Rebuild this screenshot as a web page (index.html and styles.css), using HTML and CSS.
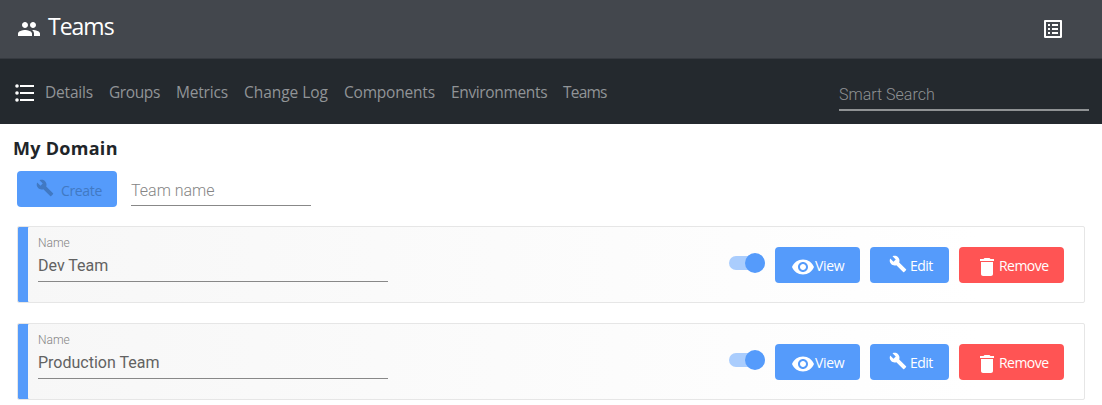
FILE: index.html
```html
<!DOCTYPE html>
<html lang="en">
<head>
<meta charset="utf-8">
<title>Teams</title>
<link rel="stylesheet" href="styles.css">
</head>
<body>
<svg class="sprite" aria-hidden="true">
  <symbol id="people" viewBox="0 0 24 24"><path d="M16 11c1.66 0 2.99-1.34 2.99-3S17.66 5 16 5c-1.66 0-3 1.34-3 3s1.34 3 3 3zm-8 0c1.66 0 2.99-1.34 2.99-3S9.66 5 8 5C6.34 5 5 6.34 5 8s1.34 3 3 3zm0 2c-2.33 0-7 1.17-7 3.5V19h14v-2.5c0-2.33-4.67-3.5-7-3.5zm8 0c-.29 0-.62.02-.97.05 1.16.84 1.97 1.97 1.97 3.45V19h6v-2.5c0-2.33-4.67-3.5-7-3.5z"/></symbol>
  <symbol id="list" viewBox="0 0 24 24"><path d="M4 10.2a1.8 1.8 0 1 0 0 3.6 1.8 1.8 0 0 0 0-3.6zm0-7a1.8 1.8 0 1 0 0 3.6 1.8 1.8 0 0 0 0-3.6zm0 14a1.8 1.8 0 1 0 0 3.6 1.8 1.8 0 0 0 0-3.600zM7 20h14v-2H7v2zm0-7h14v-2H7v2zm0-9v2h14V4H7z"/></symbol>
  <symbol id="list-alt" viewBox="0 0 24 24"><path d="M19 5v14H5V5h14m1.1-2H3.9c-.5 0-.9.4-.9.9v16.2c0 .4.4.9.9.9h16.2c.4 0 .9-.5.9-.9V3.9c0-.5-.5-.9-.9-.9zM11 7h6v2h-6V7zm0 4h6v2h-6v-2zm0 4h6v2h-6zM7 7h2v2H7zm0 4h2v2H7zm0 4h2v2H7z"/></symbol>
  <symbol id="build" viewBox="0 0 24 24"><path d="M22.7 19l-9.1-9.1c.9-2.3.4-5-1.5-6.9-2-2-5-2.4-7.4-1.3L9 6 6 9 1.6 4.7C.4 7.1.9 10.1 2.9 12.1c1.9 1.9 4.6 2.4 6.9 1.5l9.1 9.1c.4.4 1 .4 1.4 0l2.3-2.3c.5-.4.5-1.1.1-1.4z"/></symbol>
  <symbol id="eye" viewBox="0 0 24 24"><path d="M12 4.5C7 4.5 2.73 7.61 1 12c1.73 4.39 6 7.5 11 7.5s9.27-3.11 11-7.5c-1.73-4.39-6-7.5-11-7.5zM12 17c-2.76 0-5-2.24-5-5s2.24-5 5-5 5 2.24 5 5-2.24 5-5 5zm0-8c-1.66 0-3 1.34-3 3s1.34 3 3 3 3-1.34 3-3-1.34-3-3-3z"/></symbol>
  <symbol id="trash" viewBox="0 0 24 24"><path d="M6 19c0 1.1.9 2 2 2h8c1.1 0 2-.9 2-2V7H6v12zM19 4h-3.5l-1-1h-5l-1 1H5v2h14V4z"/></symbol>
</svg>
<header class="topbar">
  <svg class="icon"><use href="#people"/></svg>
  <h1 class="title">Teams</h1>
  <svg class="icon topbar-action"><use href="#list-alt"/></svg>
</header>
<nav class="navbar">
  <svg class="icon"><use href="#list"/></svg>
  <ul class="links">
    <li class="details">Details</li>
    <li class="groups">Groups</li>
    <li class="metrics">Metrics</li>
    <li class="changelog">Change Log</li>
    <li class="components">Components</li>
    <li class="environments">Environments</li>
    <li class="teams">Teams</li>
  </ul>
  <div class="search">Smart Search</div>
</nav>
<main class="content">
  <h2 class="domain">My Domain</h2>
  <div class="create-row">
    <div class="btn create"><svg class="icon small"><use href="#build"/></svg><span>Create</span></div>
    <div class="team-name">Team name</div>
  </div>
  <section class="card">
    <div class="field"><div class="label">Name</div><div class="value">Dev Team</div></div>
    <div class="toggle"><div class="thumb"></div></div>
    <div class="btn view"><svg class="icon"><use href="#eye"/></svg><span>View</span></div>
    <div class="btn edit"><svg class="icon small"><use href="#build"/></svg><span>Edit</span></div>
    <div class="btn remove"><svg class="icon"><use href="#trash"/></svg><span>Remove</span></div>
  </section>
  <section class="card">
    <div class="field"><div class="label">Name</div><div class="value">Production Team</div></div>
    <div class="toggle"><div class="thumb"></div></div>
    <div class="btn view"><svg class="icon"><use href="#eye"/></svg><span>View</span></div>
    <div class="btn edit"><svg class="icon small"><use href="#build"/></svg><span>Edit</span></div>
    <div class="btn remove"><svg class="icon"><use href="#trash"/></svg><span>Remove</span></div>
  </section>
</main>
</body>
</html>
```
FILE: styles.css
```css
* { box-sizing: border-box; }
body {
  margin: 0;
  height: 405px;
  overflow: hidden;
  background: #fff;
  font-family: "Open Sans", "Noto Sans", sans-serif;
}
.sprite { display: none; }
.icon { width: 24px; height: 24px; fill: currentColor; flex: none; }
.small { width: 18px; height: 18px; }

.topbar {
  display: flex;
  height: 59px;
  padding: 17px 37px 0 17px;
  background: #43474d;
  border-bottom: 1px solid #363a40;
  color: #fff;
}
.title {
  margin: -6px 0 0 7px;
  font-size: 23px;
  font-weight: 400;
  line-height: 31px;
  letter-spacing: -1px;
}
.topbar-action { margin-left: auto; }

.navbar {
  display: flex;
  height: 65px;
  padding: 22px 13px 0 13px;
  background: #24292e;
  color: #fff;
}
.links {
  display: flex;
  gap: 16px;
  margin: -1px 0 0 8px;
  padding: 0;
  list-style: none;
  color: #919497;
  font-size: 15.5px;
  line-height: 24px;
  white-space: nowrap;
}
.details { width: 48px; letter-spacing: -0.2px; }
.groups { width: 51px; letter-spacing: -0.4px; }
.metrics { width: 52px; letter-spacing: -0.2px; }
.changelog { width: 84px; letter-spacing: -0.05px; }
.components { width: 91px; letter-spacing: -0.2px; }
.environments { width: 96px; letter-spacing: -0.35px; }
.teams { width: 44px; letter-spacing: -0.8px; }
.search {
  width: 250px;
  height: 30px;
  margin-left: auto;
  border-bottom: 2px solid #8f9294;
  color: #8f9294;
  font: 300 16px/27px Roboto, sans-serif;
}

.content { padding: 0 17px; }
.domain {
  margin: 0 0 0 -4px;
  padding-top: 12px;
  color: #212529;
  font-size: 18px;
  font-weight: 700;
  line-height: 25px;
  letter-spacing: 0.28px;
}
.create-row { display: flex; gap: 14px; margin-top: 10px; }
.team-name {
  width: 180px;
  height: 35px;
  border-bottom: 1px solid #888;
  color: #858585;
  font: 300 16px/39px Roboto, sans-serif;
}
.btn {
  display: flex;
  height: 36px;
  border-radius: 4px;
  background: #559bfb;
  color: #fff;
  font-size: 14px;
  line-height: 37px;
  letter-spacing: -0.55px;
}
.create { width: 100px; padding-left: 19px; color: #4179c3; letter-spacing: -0.35px; }
.create .icon { margin: 8px 7px 0 0; }
.create span { padding-top: 1px; }

.card {
  display: flex;
  height: 77px;
  margin-top: 19px;
  padding: 20px;
  border: 1px solid #e6e6e6;
  border-radius: 2px;
  background: linear-gradient(90deg, #f7f7f7, #fff 90%);
  box-shadow: inset 10px 0 #559bfb;
}
.card + .card { margin-top: 20px; }
.field {
  width: 350px;
  height: 47px;
  margin-top: -12px;
  border-bottom: 1px solid #888;
  font-family: Roboto, sans-serif;
}
.label { color: #858585; font-size: 12px; font-weight: 300; line-height: 16px; }
.value { color: #626262; font-size: 16px; line-height: 30px; }
.toggle {
  width: 36px;
  height: 14px;
  margin: 9px 10px 0 auto;
  border-radius: 7px;
  background: #aacdfd;
}
.thumb {
  width: 20px;
  height: 20px;
  margin: -3px 0 0 16px;
  border-radius: 50%;
  background: #559bfb;
}
.view { width: 85px; padding-left: 16px; }
.edit { width: 79px; margin-left: 10px; padding-left: 19px; }
.remove { width: 105px; margin-left: 10px; padding-left: 16px; }
.card .remove { background: #ff5454; }
.card .btn .icon { margin-top: 8px; }
.view span { letter-spacing: -0.3px; }
.edit .icon { margin-right: 3px; }
```
